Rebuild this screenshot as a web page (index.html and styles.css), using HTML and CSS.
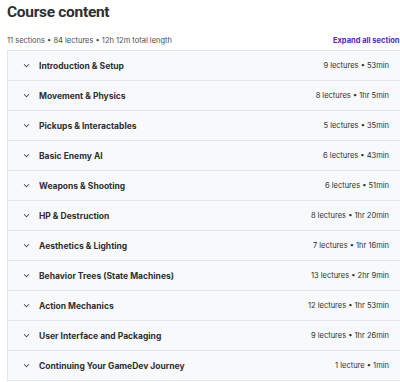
FILE: index.html
```html
<!DOCTYPE html>
<html lang="en">
<head>
    <meta charset="utf-8">
    <link rel="stylesheet" href="styles.css">
</head>
<body>
<main class="curriculum">
    <h2 class="curriculum-title">Course content</h2>
    <div class="curriculum-meta">
        <span>11 sections • 84 lectures • 12h 12m total length</span>
        <a href="javascript:void(0)" class="expand-all">Expand all sections</a>
    </div>
    <ul class="section-list">
        <li class="section"><span class="chevron"></span><span class="section-name">Introduction &amp; Setup</span><span class="section-info">9 lectures • 53min</span></li>
        <li class="section"><span class="chevron"></span><span class="section-name">Movement &amp; Physics</span><span class="section-info">8 lectures • 1hr 5min</span></li>
        <li class="section"><span class="chevron"></span><span class="section-name">Pickups &amp; Interactables</span><span class="section-info">5 lectures • 35min</span></li>
        <li class="section"><span class="chevron"></span><span class="section-name">Basic Enemy AI</span><span class="section-info">6 lectures • 43min</span></li>
        <li class="section"><span class="chevron"></span><span class="section-name">Weapons &amp; Shooting</span><span class="section-info">6 lectures • 51min</span></li>
        <li class="section"><span class="chevron"></span><span class="section-name">HP &amp; Destruction</span><span class="section-info">8 lectures • 1hr 20min</span></li>
        <li class="section"><span class="chevron"></span><span class="section-name">Aesthetics &amp; Lighting</span><span class="section-info">7 lectures • 1hr 16min</span></li>
        <li class="section"><span class="chevron"></span><span class="section-name">Behavior Trees (State Machines)</span><span class="section-info">13 lectures • 2hr 9min</span></li>
        <li class="section"><span class="chevron"></span><span class="section-name">Action Mechanics</span><span class="section-info">12 lectures • 1hr 53min</span></li>
        <li class="section"><span class="chevron"></span><span class="section-name">User Interface and Packaging</span><span class="section-info">9 lectures • 1hr 26min</span></li>
        <li class="section"><span class="chevron"></span><span class="section-name">Continuing Your GameDev Journey</span><span class="section-info">1 lecture • 1min</span></li>
    </ul>
</main>
</body>
</html>
```
FILE: styles.css
```css
body{margin:0;background:#fff;font-family:"Inter","Roboto",sans-serif;color:#2d2f31;overflow:hidden;}
.curriculum{padding:2px 0 0 7px;}
.curriculum-title{margin:0;font-family:"Roboto",sans-serif;font-size:15.5px;font-weight:700;letter-spacing:-0.3px;line-height:20px;}
.curriculum-meta{display:flex;align-items:center;margin-top:13px;height:10px;font-size:7.5px;color:#4a4d50;overflow:hidden;white-space:nowrap;}
.curriculum-meta span{flex-shrink:0;}
.curriculum-meta .expand-all{flex-shrink:0;margin-left:161px;color:#5624d0;font-weight:700;text-decoration:none;font-size:7.5px;}
.section-list{list-style:none;margin:5px 0 0;padding:0;border-left:1px solid #e3e6e9;border-top:1px solid #e3e6e9;}
.section{display:flex;align-items:center;height:29px;background:#f8f9fa;border-bottom:1px solid #e3e6e9;}
.section .chevron{width:4px;height:4px;margin:0 10px 2px 16px;border-right:1px solid #2d2f31;border-bottom:1px solid #2d2f31;transform:rotate(45deg) scale(.8);}
.section .section-name{font-size:8.5px;font-weight:700;color:#2d2f31;}
.section .section-info{margin-left:auto;margin-right:11px;font-size:7.5px;color:#2d2f31;}
```
